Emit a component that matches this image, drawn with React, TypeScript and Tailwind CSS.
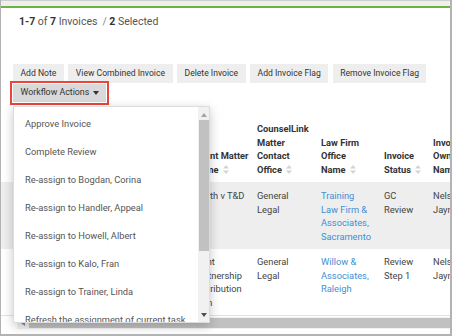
import React from "react";

const toolbarButtons = ["Add Note", "View Combined Invoice", "Delete Invoice", "Add Invoice Flag", "Remove Invoice Flag"];

const workflowActions = [
  "Approve Invoice",
  "Complete Review",
  "Re-assign to Bogdan, Corina",
  "Re-assign to Handler, Appeal",
  "Re-assign to Howell, Albert",
  "Re-assign to Kalo, Fran",
  "Re-assign to Trainer, Linda",
  "Refresh the assignment of current task",
];

const headers = [
  ["Client Matter", "Name"],
  ["CounselLink", "Matter", "Contact", "Office"],
  ["Law Firm", "Office", "Name"],
  ["Invoice", "Status"],
  ["Invoice", "Owner", "Name"],
];

type Cell = { lines: string[]; link?: boolean };

const rows: { shaded: boolean; cells: Cell[] }[] = [
  {
    shaded: true,
    cells: [
      { lines: ["Smith v T&D"] },
      { lines: ["General", "Legal"] },
      { lines: ["Training", "Law Firm &", "Associates,", "Sacramento"], link: true },
      { lines: ["GC", "Review"] },
      { lines: ["Nelson,", "Jayne"] },
    ],
  },
  {
    shaded: false,
    cells: [
      { lines: ["Joint", "Partnership", "Distribution", "Plan"] },
      { lines: ["General", "Legal"] },
      { lines: ["Willow &", "Associates,", "Raleigh"], link: true },
      { lines: ["Review", "Step 1"] },
      { lines: ["Nelson,", "Jayne"] },
    ],
  },
];

const SortIcon = () => (
  <svg width="6" height="9" viewBox="0 0 6 9" className="ml-[4px] inline-block align-[-1px]">
    <path d="M3 0 L6 3.6 H0 Z M3 9 L0 5.4 H6 Z" fill="#d4d4d4" />
  </svg>
);

const Caret = ({ up = false, color = "#333" }: { up?: boolean; color?: string }) => (
  <svg width="6" height="4" viewBox="0 0 6 4" className="inline-block">
    <path d={up ? "M3 0 L6 4 H0 Z" : "M0 0 H6 L3 4 Z"} fill={color} />
  </svg>
);

const GRID = "grid grid-cols-[193px_63px_64px_63px_49px_1fr]";

const App = () => {
  return (
    <div className="relative flex h-[336px] w-[452px] flex-col overflow-hidden border-r-2 border-b-2 border-l border-[#b3b3b3] bg-white font-[Roboto,sans-serif]">
      {/* top frame */}
      <div className="h-[6px] shrink-0 border-t border-[#cfcfcf] bg-[#efefef]" />
      <div className="h-[2px] shrink-0 bg-[#6db33f]" />

      {/* summary */}
      <div className="mt-[7px] pl-[18px] text-[10.5px] leading-[14px] text-[#555]">
        <span className="font-bold text-[#333]">1-7</span> of <span className="font-bold text-[#333]">7</span> Invoices
        <span className="ml-[5px] text-[#888]">/</span> <span className="font-bold text-[#333]">2</span> Selected
      </div>

      {/* toolbar */}
      <div className="mt-[35px] flex gap-[4.5px] pl-[12px]">
        {toolbarButtons.map((label) => (
          <button key={label} className="h-[19px] bg-[#eeeeee] px-[7.5px] text-[8.6px] whitespace-nowrap text-[#333]">
            {label}
          </button>
        ))}
      </div>
      <div className="mt-[1px] pl-[12px]">
        <button className="flex h-[18px] items-center gap-[4px] bg-[#d9d9d9] pr-[7px] pl-[7.5px] text-[8.8px] whitespace-nowrap text-[#333] outline-2 outline-offset-1 outline-[#e8453c]">
          Workflow Actions
          <Caret />
        </button>
      </div>

      {/* invoice table */}
      <div className="mt-[20px] text-[9.3px] leading-[13.7px]">
        <div className={`${GRID} pb-[5px] font-bold text-[#333]`}>
          <div />
          {headers.map((lines, i) => (
            <div key={i} className="flex flex-col justify-end whitespace-nowrap">
              {lines.map((line, j) => (
                <div key={j}>
                  {line}
                  {j === lines.length - 1 && i < headers.length - 1 && <SortIcon />}
                </div>
              ))}
            </div>
          ))}
        </div>
        {rows.map((row, r) => (
          <div key={r} className={`${GRID} h-[67px] ${row.shaded ? "bg-[#eeeeee] pt-[7px]" : "border-b border-[#e2e2e2] pt-[6px]"} text-[#444]`}>
            <div />
            {row.cells.map((cell, c) => (
              <div key={c} className={`whitespace-nowrap ${cell.link ? "text-[#3f8fd4]" : ""}`}>
                {cell.lines.map((line, j) => (
                  <div key={j}>{line}</div>
                ))}
              </div>
            ))}
          </div>
        ))}
      </div>

      {/* horizontal scrollbar */}
      <div className="mt-[1px] ml-[16px] flex h-[12px] items-center bg-[#f1f1f1]">
        <div className="flex w-[12px] justify-center">
          <svg width="4" height="6" viewBox="0 0 4 6">
            <path d="M4 0 V6 L0 3 Z" fill="#888" />
          </svg>
        </div>
        <div className="h-[10px] flex-1 bg-[#c1c1c1]" />
      </div>

      {/* workflow actions menu */}
      <div className="absolute top-[106px] left-[12px] h-[217px] w-[197px] overflow-hidden border border-[#dcdcdc] bg-white shadow-[0_3px_10px_rgba(0,0,0,0.22)]">
        <ul className="pt-[3px]">
          {workflowActions.map((action) => (
            <li key={action} className="flex h-[28px] items-center pl-[11px] text-[9.3px] whitespace-nowrap text-[#555]">
              {action}
            </li>
          ))}
        </ul>
        <div className="absolute top-0 right-0 bottom-0 flex w-[11px] flex-col items-center bg-[#f1f1f1]">
          <div className="mt-[5px] flex h-[5px] items-center">
            <Caret up color="#a3a3a3" />
          </div>
          <div className="mt-[3px] h-[131px] w-[10px] bg-[#c1c1c1]" />
          <div className="mt-auto mb-[5px] flex h-[5px] items-center">
            <Caret color="#505050" />
          </div>
        </div>
      </div>
    </div>
  );
};

export default App;
